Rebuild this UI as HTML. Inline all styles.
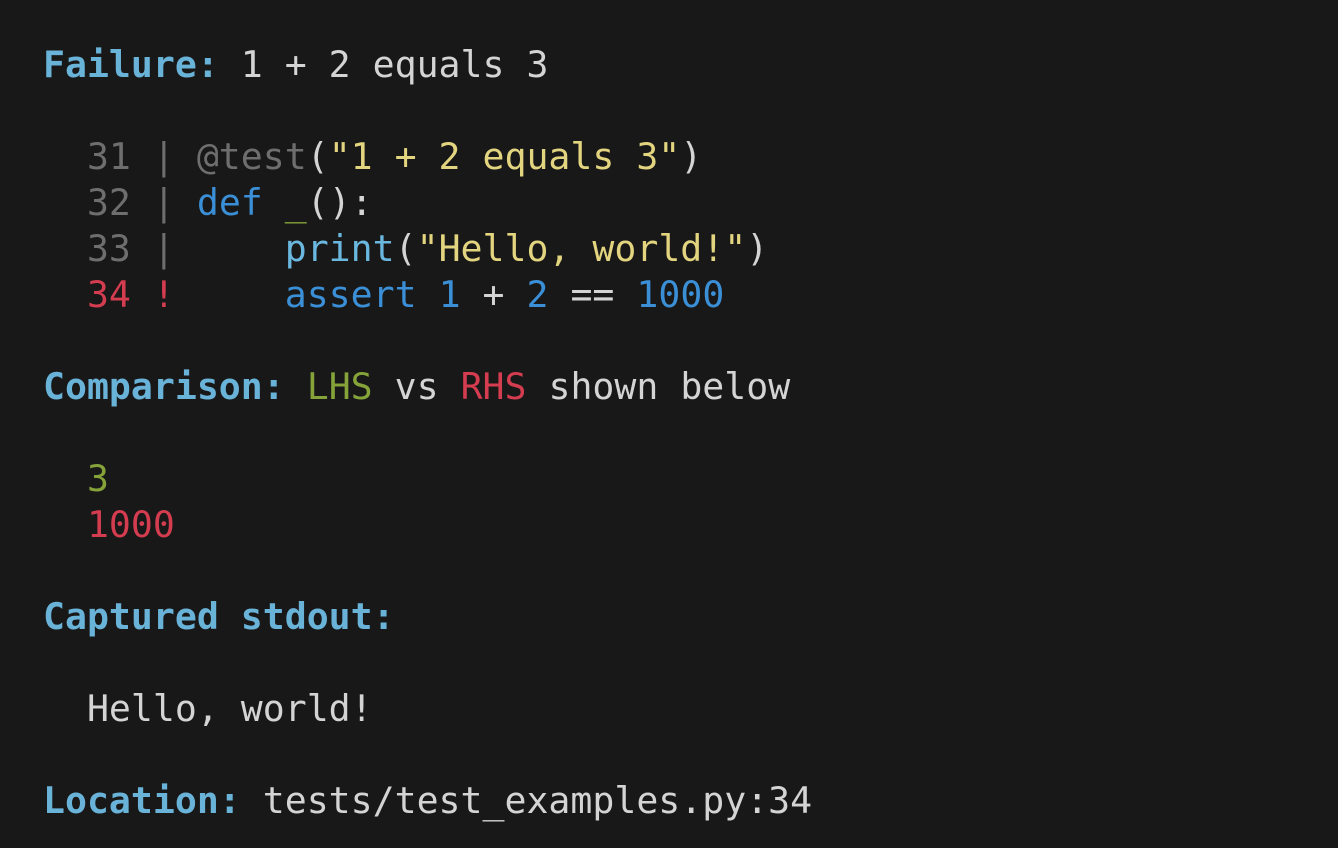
<!DOCTYPE html>
<html><head><style>
html,body{margin:0;background:#181818;width:1338px;height:848px;overflow:hidden}
pre{margin:0;position:absolute;left:43px;top:42px;font-family:"DejaVu Sans Mono","Liberation Mono",monospace;font-size:36.5px;line-height:46px;color:#d4d4d4}
.h{color:#69b2d8;font-weight:bold}.g{color:#6e6e6e}.b{color:#3b8fd6}.p{color:#6ab8e0}.y{color:#e3d57f}.gr{color:#86a33a}.r{color:#d43c50}
</style></head><body><pre><span class="h">Failure:</span> 1 + 2 equals 3

  <span class="g">31 | @test</span>(<span class="y">"1 + 2 equals 3"</span>)
  <span class="g">32 |</span> <span class="b">def</span> <span class="gr">_</span>():
  <span class="g">33 |</span>     <span class="p">print</span>(<span class="y">"Hello, world!"</span>)
  <span class="r">34 !</span>     <span class="b">assert</span> <span class="b">1</span> + <span class="b">2</span> == <span class="b">1000</span>

<span class="h">Comparison:</span> <span class="gr">LHS</span> vs <span class="r">RHS</span> shown below

  <span class="gr">3</span>
  <span class="r">1000</span>

<span class="h">Captured stdout:</span>

  Hello, world!

<span class="h">Location:</span> tests/test_examples.py:34</pre></body></html>
